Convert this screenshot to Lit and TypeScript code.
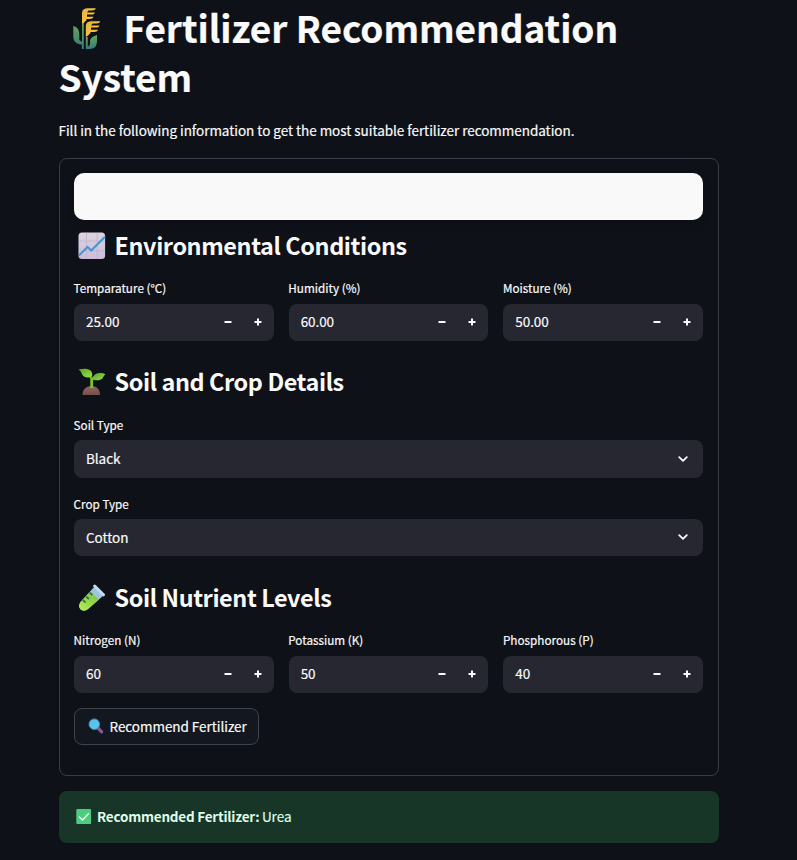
import { LitElement, html, css, svg } from "lit";
import { customElement, property } from "lit/decorators.js";

const wheat = svg`<svg class="wheat" width="30" height="44" viewBox="0 0 30 44">
  <defs>
    <linearGradient id="stem" x1="0" y1="0" x2="0" y2="1"><stop offset="0" stop-color="#69a84e"/><stop offset="1" stop-color="#357a80"/></linearGradient>
    <linearGradient id="ear" x1="0" y1="0" x2="1" y2="1"><stop offset="0" stop-color="#e8b640"/><stop offset="1" stop-color="#ffc938"/></linearGradient>
  </defs>
  <path d="M1.300 19C5 20 7.300 22.500 7.300 27V33L10 35V16H11.800V42H9.800V37.500C4 37 1.300 34 1.300 30Z" fill="url(#stem)"/>
  <path d="M13.800 30H15.800V40L18 37.500V34C18 31 21.500 29 25 28V34C25 39 22.500 42 17.500 42H13.800Z" fill="url(#stem)"/>
  <path d="M10 16.500V5.500C10.500 2.500 12.500 1.300 15.500 1.300H23.800C23.300 3 22 3.500 20 3.500H16.500L15 5.500H23C22.300 7.200 21 7.600 19.500 7.600H15V9.800H21.500C21 11.500 19.500 12 17.500 12H14.500V13L12 15.800Z" fill="url(#ear)"/>
  <path d="M13.800 30V18.500C14.300 15.500 16.300 14.300 19.300 14.300H28.300C27.800 16 26.300 16.500 24.300 16.500H20.500L19 18.500H27.500C27 20.200 25.500 20.600 23.500 20.600H19V22.800H26C25.500 24.500 24 25 22 25H18.500V26L15.800 28.800Z" fill="url(#ear)"/>
</svg>`;

const chart = svg`<svg class="emoji" width="28" height="28" viewBox="0 0 28 28">
  <defs><linearGradient id="paper" x1="0" y1="0" x2="0" y2="1"><stop offset="0" stop-color="#ddd4e0"/><stop offset="1" stop-color="#cbbddb"/></linearGradient></defs>
  <rect x=".5" y=".4" width="26.600" height="26.600" rx="3.500" fill="url(#paper)"/>
  <path d="M8.500 .8V26.700M19.200 .8V26.700M.7 9H27M.7 18.800H27" stroke="#bfb2cb" stroke-width=".8"/>
  <path d="M1 23.500L9.500 15L13.200 18.500L27 4.800" fill="none" stroke="#4595cf" stroke-width="2"/>
</svg>`;

const seedling = svg`<svg class="emoji" width="28" height="28" viewBox="0 0 28 28">
  <defs>
    <linearGradient id="leaf" x1="0" y1="0" x2="1" y2="1"><stop offset="0" stop-color="#55a02c"/><stop offset="1" stop-color="#9ae63e"/></linearGradient>
    <linearGradient id="soil" x1="0" y1="0" x2="0" y2="1"><stop offset="0" stop-color="#94665f"/><stop offset="1" stop-color="#754f4b"/></linearGradient>
  </defs>
  <path d="M4.500 27C4.500 21.500 8 18 13.500 18S22 21.500 22 27Z" fill="url(#soil)"/>
  <path d="M12.300 20V11C12.300 9.500 11 8.500 8.500 8.200L10 6.200C12 7 13.300 8 13.900 9.800C15 8.200 17 7.400 19 7.400V9.300C16.500 9.500 15.100 11 15.100 13V20Z" fill="#78c735"/>
  <path d="M.5 1.600C5 .3 10 .4 12.500 2.500C14.200 4.200 14.500 6 14 8.500C10 10.300 6 9.800 4.300 6.800C3.300 4.600 2.300 2.500 .5 1.600Z" fill="url(#leaf)"/>
  <path d="M27.500 6.200C24.500 4.500 19.500 4.500 17 6.500C15.500 7.700 14.800 9.500 14.600 11.500C18 12.800 22.500 12.800 24.500 10.300C25.700 8.700 26.200 6.800 27.500 6.200Z" fill="url(#leaf)"/>
</svg>`;

const tube = svg`<svg class="emoji" width="28" height="28" viewBox="0 0 28 28">
  <defs><linearGradient id="liquid" x1="1" y1="0" x2="0" y2="1"><stop offset="0" stop-color="#77bf42"/><stop offset="1" stop-color="#b7ee54"/></linearGradient></defs>
  <path d="M16.500 2.500L25.500 11.500L10 25C7.500 27.300 4.500 27 2.700 25.500C.5 23.500 .8 20.500 2.500 18Z" fill="#9ec4de"/>
  <path d="M12 8L21 15.500L10 25C7.500 27.300 4.500 27 2.700 25.500C.5 23.500 .8 20.500 2.500 18Z" fill="url(#liquid)"/>
  <path d="M11.500 8.500L14.500 11M8 12.500L11 15M4.700 16L7.700 18.500" stroke="#347c43" stroke-width="2"/>
  <path d="M16.700 2L25.500 10.800" stroke="#c1dcf0" stroke-width="3" stroke-linecap="round"/>
</svg>`;

const lens = svg`<svg class="small" width="16" height="16" viewBox="0 0 16 16">
  <path d="M9.500 9.500L13.600 13.800" stroke="#8a5590" stroke-width="3.300" stroke-linecap="round"/>
  <circle cx="6.300" cy="6.200" r="5.300" fill="#5ac5ec" stroke="#4a7fae" stroke-width="1"/>
</svg>`;

const check = svg`<svg class="small" width="16" height="16" viewBox="0 0 16 16">
  <rect x=".3" y=".1" width="14.800" height="14.800" rx="1" fill="#4dcb80"/>
  <path d="M3.400 8L6.500 11L12.400 4.800" fill="none" stroke="#e9fff0" stroke-width="1.400" stroke-linecap="round" stroke-linejoin="round"/>
</svg>`;

@customElement("number-field")
class NumberField extends LitElement {
  @property() label = "";
  @property() value = "";
  static styles = css`
    :host { display: block; min-width: 0; }
    .label { font-size: 11.7px; line-height: 14px; height: 23px; letter-spacing: .02px; margin-left: -.4px; }
    .box { height: 37px; display: flex; align-items: center; border-radius: 8px; background: #262730; padding-left: 12px; }
    .value { flex: 1; font-size: 13.500px; line-height: 24px; padding-bottom: 3px; letter-spacing: -.08px; }
    .step { width: 30px; display: flex; justify-content: center; padding-bottom: 1px; }
    .last { margin-right: 1px; }
    svg { display: block; }
  `;
  render() {
    return html`<div class="label">${this.label}</div>
      <div class="box">
        <div class="value">${this.value}</div>
        <div class="step"><svg width="8" height="8" viewBox="0 0 8 8"><path d="M.5 4H7.500" stroke="#fafafa" stroke-width="2"/></svg></div>
        <div class="step last"><svg width="8" height="8" viewBox="0 0 8 8"><path d="M.5 4H7.500M4 .5V7.500" stroke="#fafafa" stroke-width="2"/></svg></div>
      </div>`;
  }
}

@customElement("select-field")
class SelectField extends LitElement {
  @property() label = "";
  @property() value = "";
  static styles = css`
    :host { display: block; }
    .label { font-size: 11.7px; line-height: 18px; height: 24px; margin-left: -.4px; }
    .box { height: 37.500px; box-sizing: border-box; display: flex; align-items: center; justify-content: space-between; border-radius: 8px; background: #262730; padding: 0 15px 0 12px; font-size: 13.500px; line-height: 24px; letter-spacing: -.04px; }
    .box span { padding-bottom: 1px; }
  `;
  render() {
    return html`<div class="label">${this.label}</div>
      <div class="box"><span>${this.value}</span>
        <svg width="10" height="8" viewBox="0 0 10 8"><path d="M1.200 2.200L5 5.900L8.800 2.200" fill="none" stroke="#fafafa" stroke-width="1.800" stroke-linecap="round" stroke-linejoin="round"/></svg>
      </div>`;
  }
}

@customElement("app-root")
class AppRoot extends LitElement {
  static styles = css`
    :host { display: block; box-sizing: border-box; height: 860px; padding: 3px 78px 0 59px; overflow: hidden; background: #0e1117; color: #fafafa; font-family: "Noto Sans CJK SC", "Noto Sans", sans-serif; -webkit-text-stroke: .2px; }
    h1, h2, p { margin: 0; }
    h1 { font-size: 37px; line-height: 49px; font-weight: 700; height: 98px; letter-spacing: -.05px; margin-left: -.5px; }
    .wheat { vertical-align: -8px; margin: 0 22px 0 13px; }
    .intro { font-size: 13.500px; line-height: 24px; margin-top: 17px; letter-spacing: -.035px; margin-left: -.5px; }
    .form { box-sizing: border-box; height: 618px; margin-top: 16px; border: 1px solid #3b3d45; border-radius: 8px; padding: 14px 15px 0 14px; }
    .card { height: 47px; border-radius: 10px; background: #f9f9f9; box-shadow: 0 4px 10px rgba(0, 0, 0, .1); }
    h2 { display: flex; align-items: center; height: 32px; font-size: 23.400px; line-height: 32px; font-weight: 600; letter-spacing: -.4px; white-space: nowrap; -webkit-text-stroke: 0; }
    h2 span { padding-bottom: 2px; }
    .emoji { flex: none; margin: 0 9px 0 3.500px; }
    .environment { margin-top: 10px; }
    .soil { margin-top: 24.500px; }
    .nutrients { margin-top: 26px; }
    .row { display: grid; grid-template-columns: repeat(3, 1fr); gap: 15px; margin-top: 19px; }
    .nutrients + .row { margin-top: 18.500px; }
    .selects { display: grid; gap: 17px; margin-top: 18.500px; }
    button { display: flex; align-items: center; box-sizing: border-box; width: 185px; height: 37px; margin-top: 15px; padding: 0 0 0 13px; border: 1px solid #41434b; border-radius: 8px; background: #131720; color: inherit; font: 13.500px/24px "Noto Sans CJK SC", "Noto Sans", sans-serif; letter-spacing: -.04px; white-space: nowrap; }
    .small { flex: none; margin-right: 5.500px; }
    .result { box-sizing: border-box; height: 52px; margin-top: 15px; border-radius: 8px; padding-left: 17px; display: flex; align-items: center; background: #183628; color: #dffde9; font-size: 13.500px; line-height: 24px; }
    .result .small { margin-right: 5px; }
    .result span, .result b { padding-bottom: 2px; }
    .result b { margin-right: 2.500px; font-weight: 600; letter-spacing: -.22px; -webkit-text-stroke: 0; }
  `;
  render() {
    return html`
      <h1>${wheat}<span>Fertilizer Recommendation System</span></h1>
      <p class="intro">Fill in the following information to get the most suitable fertilizer recommendation.</p>
      <section class="form">
        <div class="card"></div>
        <h2 class="environment">${chart}<span>Environmental Conditions</span></h2>
        <div class="row">
          <number-field label="Temparature (°C)" value="25.00"></number-field>
          <number-field label="Humidity (%)" value="60.00"></number-field>
          <number-field label="Moisture (%)" value="50.00"></number-field>
        </div>
        <h2 class="soil">${seedling}<span>Soil and Crop Details</span></h2>
        <div class="selects">
          <select-field label="Soil Type" value="Black"></select-field>
          <select-field label="Crop Type" value="Cotton"></select-field>
        </div>
        <h2 class="nutrients">${tube}<span>Soil Nutrient Levels</span></h2>
        <div class="row">
          <number-field label="Nitrogen (N)" value="60"></number-field>
          <number-field label="Potassium (K)" value="50"></number-field>
          <number-field label="Phosphorous (P)" value="40"></number-field>
        </div>
        <button>${lens}<span>Recommend Fertilizer</span></button>
      </section>
      <div class="result">${check}<b>Recommended Fertilizer:</b><span>Urea</span></div>
    `;
  }
}
